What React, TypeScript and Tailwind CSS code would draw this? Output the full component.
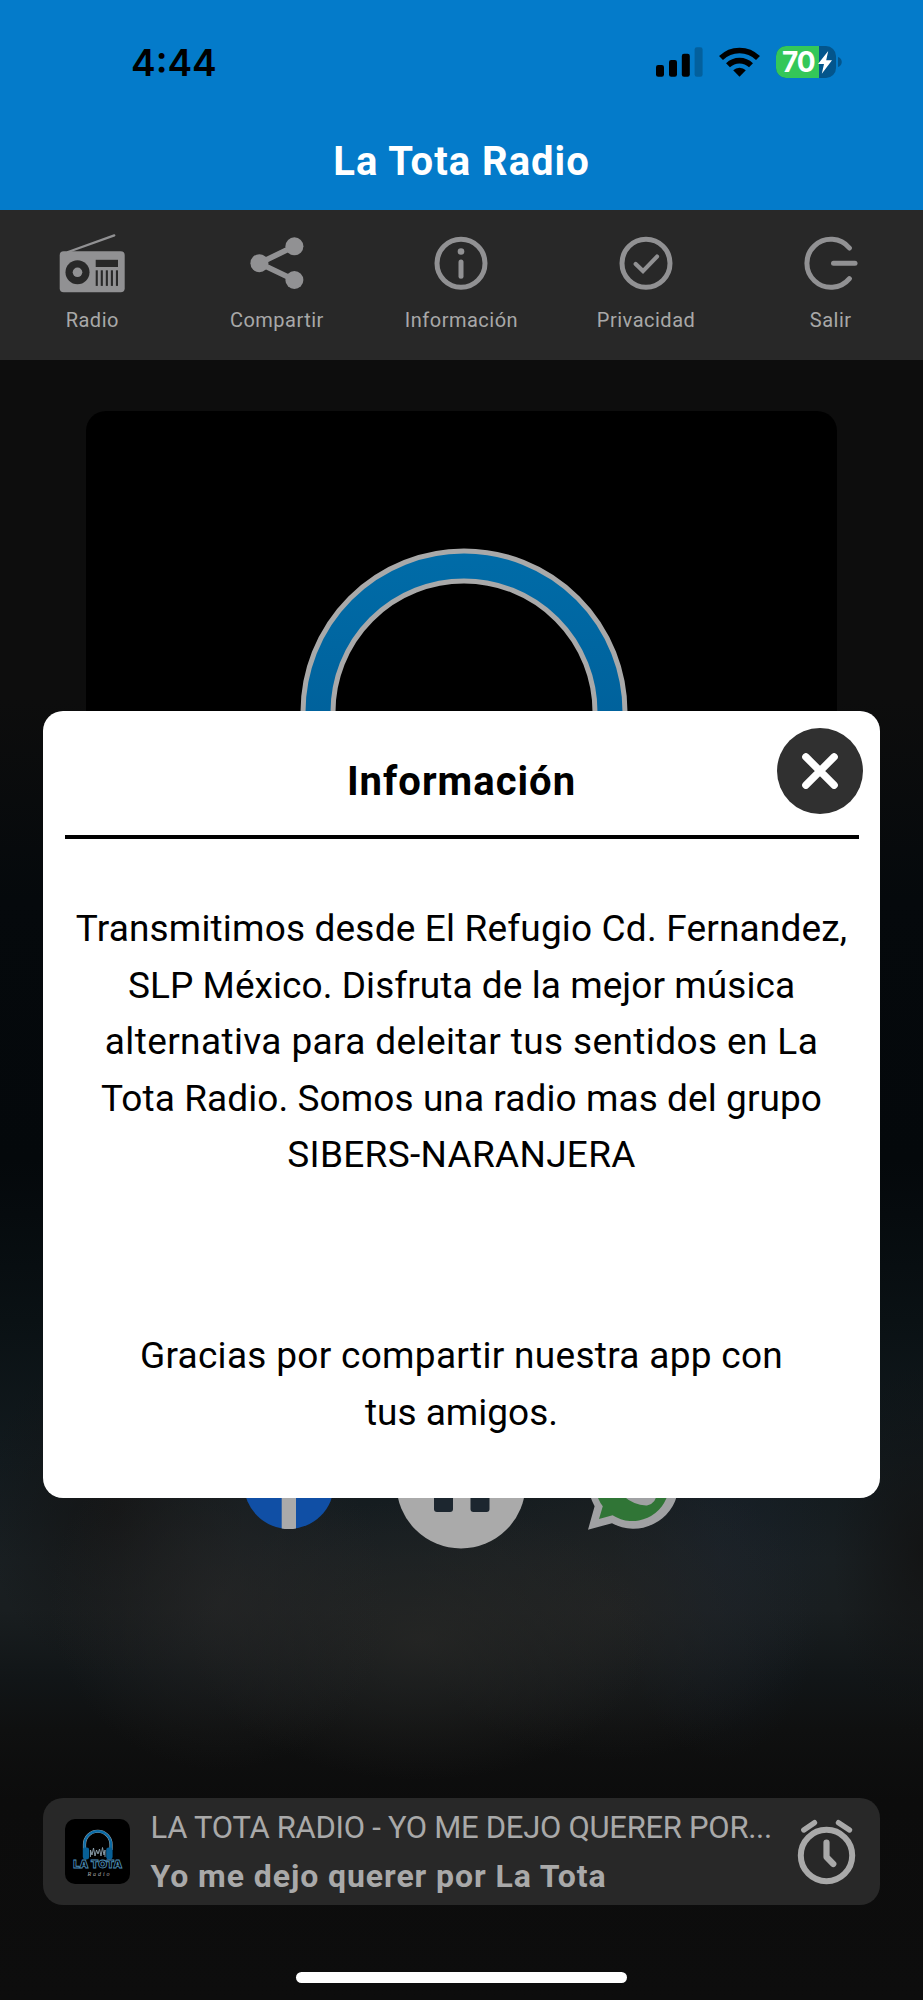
import type { ReactNode } from 'react';

const infoLines = [
  { text: 'Transmitimos desde El Refugio Cd. Fernandez,', className: 'tracking-[0.17px]' },
  { text: 'SLP México. Disfruta de la mejor música', className: 'tracking-[0.06px]' },
  { text: 'alternativa para deleitar tus sentidos en La', className: 'tracking-[0.38px]' },
  { text: 'Tota Radio. Somos una radio mas del grupo', className: 'tracking-[0.08px]' },
  { text: 'SIBERS-NARANJERA', className: 'tracking-[0.3px]' },
];

const thanksLines = [
  { text: 'Gracias por compartir nuestra app con', className: 'tracking-[0.3px]' },
  { text: 'tus amigos.', className: 'tracking-normal' },
];

function StatusBar() {
  return (
    <div className="flex items-center justify-between h-8 pl-[131px] pr-[81px]">
      <span className="mt-px font-['Inter',sans-serif] font-semibold text-[37px] leading-8 text-black">4:44</span>
      <div className="flex items-center">
        {/* Signal */}
        <svg className="w-[47px] h-8" viewBox="0 0 47 32">
          <rect x="0" y="19" width="8" height="11.7" rx="2.2" />
          <rect x="13" y="14" width="8" height="16.7" rx="2.2" />
          <rect x="25.8" y="7.7" width="8" height="23" rx="2.2" />
          <rect x="38.6" y="1.2" width="8" height="29.5" rx="2.2" fillOpacity="0.22" />
        </svg>
        {/* Wifi */}
        <svg className="ml-4 w-[41px] h-8" viewBox="0 0 41 32">
          <g fill="none" stroke="#000" strokeWidth="5.6">
            <path d="M2 12.1 A26.3 26.3 0 0 1 39 12.1" />
            <path d="M9 19.3 A16.4 16.4 0 0 1 32 19.3" />
          </g>
          <path d="M20.5 30.7 L14.2 24.3 A9 9 0 0 1 26.8 24.3 Z" />
        </svg>
        {/* Battery */}
        <div className="ml-4 relative flex w-[60px] h-8 rounded-[10px] overflow-hidden bg-[#03558c]">
          <div className="w-[43px] bg-[#34c759]" />
          <span className="absolute left-[6.5px] top-0 font-['Inter',sans-serif] font-bold text-[28px] leading-8 tracking-[-1px] text-white">
            70
          </span>
          <svg className="absolute left-[42px] top-[5px] w-[14px] h-[23px]" viewBox="0 0 14 23" fill="#fff">
            <path d="M10.2 0 L0 13 H6 L3.8 22.8 L14 9.2 H8.2 Z" />
          </svg>
        </div>
        <svg className="ml-[2.5px] w-1 h-[10px]" viewBox="0 0 4 10" fill="#03558c">
          <path d="M0 0 C5 1.5 5 8.5 0 10 Z" />
        </svg>
      </div>
    </div>
  );
}

function Tab({ label, children }: { label: string; children: ReactNode }) {
  return (
    <div className="flex-1 flex flex-col items-center">
      <svg className="w-[66px] h-[60px] text-[#919193]" viewBox="0 0 66 60" fill="none">
        {children}
      </svg>
      <span className="mt-3 text-[20px] leading-7 tracking-[0.5px] text-[#a8a8a8]">{label}</span>
    </div>
  );
}

function TabBar() {
  return (
    <nav className="flex h-[150px] pt-6 bg-[#282828]">
      <Tab label="Radio">
        <path d="M9 18 L55.3 1.4" stroke="currentColor" strokeWidth="2.2" strokeLinecap="round" />
        <rect x="0.7" y="17.2" width="65" height="41" rx="4" fill="currentColor" />
        <circle cx="18.5" cy="38.3" r="12" fill="#282828" />
        <circle cx="18.5" cy="38.3" r="4.8" fill="currentColor" />
        <rect x="36.7" y="25.8" width="22.3" height="7.2" fill="#282828" />
        {[0, 1, 2, 3, 4].map((i) => (
          <rect key={i} x={36.7 + i * 5.05} y="36.3" width="2.1" height="15.6" fill="#282828" />
        ))}
      </Tab>
      <Tab label="Compartir">
        <path d="M50.4 12.3 L15.4 29.2 L50.4 46" stroke="currentColor" strokeWidth="5.6" />
        <circle cx="50.4" cy="12.3" r="9" fill="currentColor" />
        <circle cx="15.4" cy="29.2" r="9" fill="currentColor" />
        <circle cx="50.4" cy="46" r="9" fill="currentColor" />
      </Tab>
      <Tab label="Información">
        <circle cx="33" cy="29.3" r="24" stroke="currentColor" strokeWidth="5" />
        <circle cx="33" cy="17.5" r="3.3" fill="currentColor" />
        <path d="M33 28 V42.3" stroke="currentColor" strokeWidth="5" strokeLinecap="round" />
      </Tab>
      <Tab label="Privacidad">
        <circle cx="33" cy="29.3" r="24" stroke="currentColor" strokeWidth="5" />
        <path d="M22.7 29.9 L30 37.1 L44 22.6" stroke="currentColor" strokeWidth="4.2" strokeLinecap="round" />
      </Tab>
      <Tab label="Salir">
        <path d="M51.4 14 A24 24 0 1 0 51.4 44.6" stroke="currentColor" strokeWidth="5" strokeLinecap="round" />
        <path d="M35.5 29.3 H57" stroke="currentColor" strokeWidth="5" strokeLinecap="round" />
      </Tab>
    </nav>
  );
}

function AlbumArt() {
  return (
    <div className="w-[751px] h-[751px] rounded-[20px] overflow-hidden bg-black">
      <svg className="w-full h-full" viewBox="0 0 751 751" fill="none">
        <defs>
          <linearGradient id="band" x1="0" y1="137" x2="0" y2="330" gradientUnits="userSpaceOnUse">
            <stop offset="0" stopColor="#006ca8" />
            <stop offset="1" stopColor="#00609a" />
          </linearGradient>
        </defs>
        <circle cx="378" cy="301" r="146" stroke="#a9a9a9" strokeWidth="35" />
        <circle cx="378" cy="301" r="146" stroke="url(#band)" strokeWidth="25" />
      </svg>
    </div>
  );
}

function Controls() {
  return (
    <div className="flex items-center justify-center gap-[62px] h-[130px]">
      <svg className="w-[90px] h-[90px]" viewBox="0 0 90 90">
        <circle cx="45" cy="45" r="45" fill="#104fa5" />
        <path d="M37.7 89.6 V57 H27 V44 H37.7 V35 Q37.7 20 53 20 H63 V31 H57 Q52 31 52 37 V44 H63 L61 57 H52 V89.6 Q45 90.8 37.7 89.6 Z" fill="#aaaaaa" />
      </svg>
      <svg className="w-[130px] h-[130px]" viewBox="0 0 130 130">
        <circle cx="65" cy="65" r="64.5" fill="#aaaaaa" />
        <rect x="38" y="37" width="19" height="56" rx="3" fill="#1c262f" />
        <rect x="74.5" y="37" width="19" height="56" rx="3" fill="#1c262f" />
      </svg>
      <svg className="w-[91px] h-[91px]" viewBox="0 0 91 91">
        <path d="M0 90.8 L6.6 67.2 A45 45 0 1 1 24 84.2 Z" fill="#a0a1a3" />
        <path d="M11 80 L14.8 67.3 A37 37 0 1 1 24.6 76.3 Z" fill="#307536" />
        <path d="M31 25 Q34 23 37 26 L41 35 Q41 38 37 41 Q42 50 53 54 L57 49 L68 54 Q69 64 59 66.5 Q47 67 34 56 Q22 43 24 33 Q26 27 31 25 Z" fill="#a0a1a3" />
      </svg>
    </div>
  );
}

function Thumbnail() {
  return (
    <svg className="w-[65px] h-[65px] rounded-[10px] bg-black shrink-0" viewBox="0 0 65 65" fill="none">
      <path d="M19.5 31 V25.5 A13.2 13.2 0 0 1 46 25.5 V31" stroke="#a9a9a9" strokeWidth="3.2" />
      <path d="M19.5 31 V25.5 A13.2 13.2 0 0 1 46 25.5 V31" stroke="#0b6ba6" strokeWidth="2.4" />
      <rect x="17.8" y="28.5" width="6.4" height="12" rx="2.4" fill="#075f96" />
      <rect x="41.2" y="28.5" width="6.4" height="12" rx="2.4" fill="#075f96" />
      <path
        d="M25.5 38 V31 L27 36 L28.5 29 L30 37 L31.5 31 L33 35 L34.5 30 L36 37 L37.5 28.5 L39 36 L40 31 V38"
        stroke="#8fa3b0"
        strokeWidth="0.9"
      />
      <text
        x="32.7"
        y="49"
        textAnchor="middle"
        textLength="49"
        lengthAdjust="spacingAndGlyphs"
        fill="#000"
        stroke="#4d8fb8"
        strokeWidth="0.8"
        className="font-['Inter',sans-serif] font-black text-[11px]"
      >
        LA TOTA
      </text>
      <text
        x="33.5"
        y="57"
        textAnchor="middle"
        textLength="22"
        fill="#a9a9a9"
        className="font-['Liberation_Serif',serif] italic text-[6px]"
      >
        Radio
      </text>
    </svg>
  );
}

function PlayerBar() {
  return (
    <div className="flex items-center w-[837px] h-[107px] pl-[21.5px] pr-6 rounded-[20px] bg-[#282828] text-[#a9a9a9]">
      <Thumbnail />
      <div className="ml-[21px] flex-1 flex flex-col whitespace-nowrap">
        <span className="text-[31px] leading-[49px] tracking-[-0.28px]">
          LA TOTA RADIO - YO ME DEJO QUERER POR...
        </span>
        <span className="font-bold text-[32px] leading-[49px] tracking-[0.92px]">Yo me dejo querer por La Tota</span>
      </div>
      <svg
        className="w-[60px] h-[66px] shrink-0"
        viewBox="0 0 60 66"
        fill="none"
        stroke="currentColor"
        strokeLinecap="round"
        strokeLinejoin="round"
        strokeWidth="6"
      >
        <circle cx="30.5" cy="36.5" r="25.7" />
        <path d="M30.5 23.5 V38 L37.3 45" strokeWidth="6.2" />
        <path d="M7.8 11 L18.5 3.7 M42.5 3.7 L53.5 11" strokeWidth="5.4" />
      </svg>
    </div>
  );
}

function InfoModal() {
  return (
    <div className="absolute left-[43px] top-[711px] w-[837px] h-[787px] rounded-[20px] bg-white px-[21.5px] text-center text-black">
      <h2 className="pt-[47px] h-[124px] font-bold text-[40px] leading-[48px] tracking-[1px]">Información</h2>
      <button className="absolute right-[17px] top-[17px] w-[86px] h-[86px] rounded-full bg-[#303030] flex items-center justify-center">
        <svg className="w-9 h-9" viewBox="0 0 36 36" stroke="#fff" strokeWidth="7.4" strokeLinecap="round">
          <path d="M3.9 3.9 L32.1 32.1 M32.1 3.9 L3.9 32.1" />
        </svg>
      </button>
      <div className="h-1 bg-black" />
      <div className="mt-[62px] flex flex-col text-[37px] leading-[56.6px] whitespace-nowrap">
        {infoLines.map((line) => (
          <span key={line.text} className={line.className}>
            {line.text}
          </span>
        ))}
      </div>
      <div className="mt-[144px] flex flex-col text-[37px] leading-[56.6px] whitespace-nowrap">
        {thanksLines.map((line) => (
          <span key={line.text} className={line.className}>
            {line.text}
          </span>
        ))}
      </div>
    </div>
  );
}

export default function App() {
  return (
    <div className="relative w-[923px] h-[2000px] overflow-hidden flex flex-col font-['Roboto',sans-serif] bg-[#0d0d0d]">
      <header className="h-[210px] shrink-0 pt-[46px] bg-[#047bca]">
        <StatusBar />
        <h1 className="mt-[60px] text-center font-bold text-[40px] leading-[48px] tracking-[1px] text-white">
          La Tota Radio
        </h1>
      </header>
      <TabBar />
      <main className="flex-1 flex flex-col items-center pt-[51px] bg-[radial-gradient(170px_170px_at_220px_1240px,#262626b0,transparent),radial-gradient(230px_140px_at_420px_1280px,#282826c0,transparent),radial-gradient(200px_150px_at_610px_1250px,#262625a0,transparent),radial-gradient(130px_170px_at_115px_1150px,#141414d0,transparent),radial-gradient(110px_200px_at_720px_1200px,#1a232e90,transparent),radial-gradient(90px_190px_at_923px_1190px,#121212d0,transparent),linear-gradient(#0d0d0d_0px,#0d0d0d_340px,#05090c_540px,#04080b_800px,#0a1114_960px,#121a1e_1100px,#191f22_1200px,#191e20_1250px,#111517_1320px,#0f1010_1370px,#0c0c0c_1440px,#0d0d0d_1640px)]">
        <AlbumArt />
        <div className="mt-[257px]">
          <Controls />
        </div>
        <div className="mt-[249px]">
          <PlayerBar />
        </div>
        <div className="mt-[67px] w-[331px] h-[11px] rounded-full bg-white" />
      </main>
      <InfoModal />
    </div>
  );
}
